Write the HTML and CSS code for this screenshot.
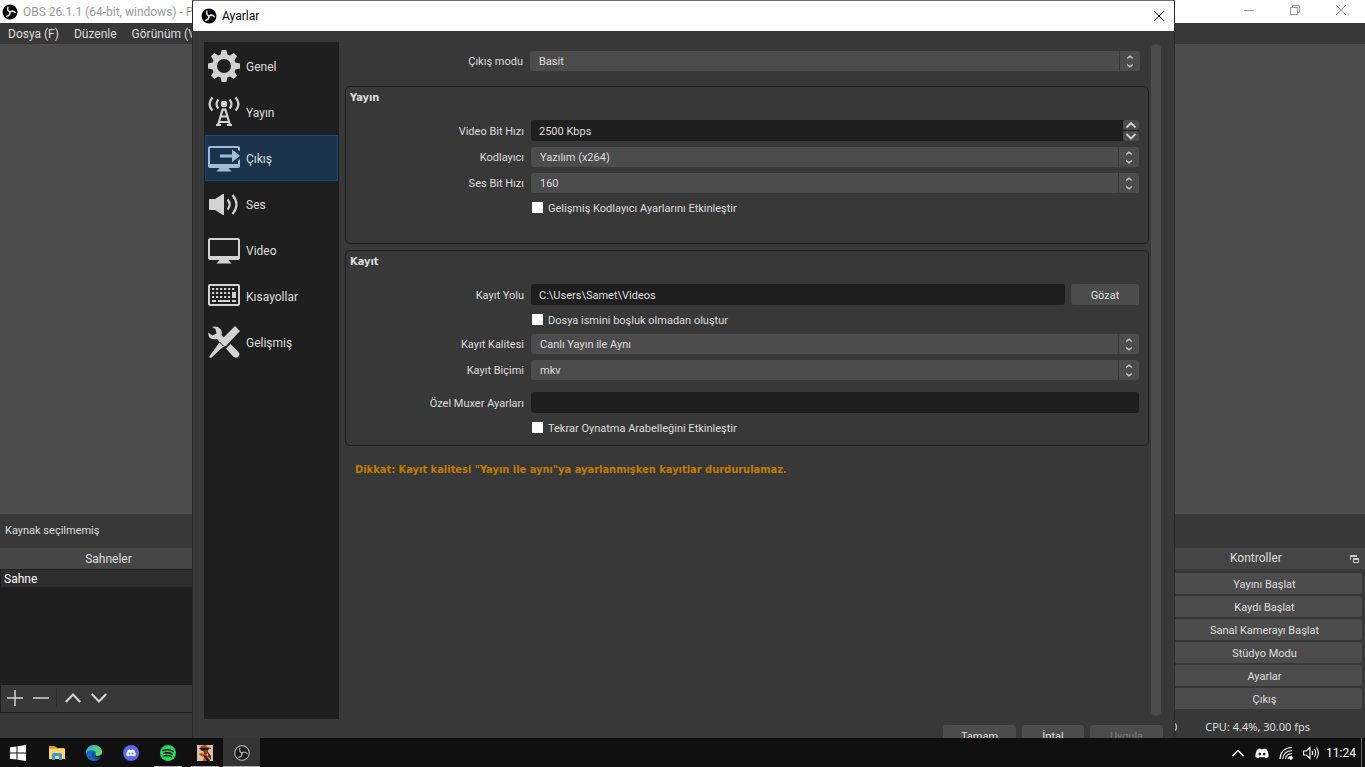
FILE: index.html
```html
<!DOCTYPE html>
<html lang="tr">
<head>
  <meta charset="UTF-8">
  <title>OBS - Ayarlar</title>
  <link rel="stylesheet" href="styles.css">
</head>
<body>

  <!-- shared icons -->
  <svg class="defs" width="0" height="0" aria-hidden="true">
    <symbol id="obs" viewBox="0 0 16 16">
      <circle cx="8" cy="8" r="7.5" fill="#050505"/>
      <g fill="none" stroke="#e6e6e6" stroke-width="1.5" stroke-linecap="round">
        <path d="M8 8C6.2 7.2 5.2 5.6 5.9 3.2"/>
        <path d="M8 8C6.2 7.2 5.2 5.6 5.9 3.2" transform="rotate(120 8 8)"/>
        <path d="M8 8C6.2 7.2 5.2 5.6 5.9 3.2" transform="rotate(240 8 8)"/>
      </g>
    </symbol>
    <symbol id="updown" viewBox="0 0 8 13">
      <path d="M1.2 3.6L4 1.2l2.8 2.4M1.2 9.4L4 11.8l2.8-2.4" fill="none" stroke="#c8c8c8" stroke-width="1.3"/>
    </symbol>
    <symbol id="discord" viewBox="0 0 16 12">
      <path fill-rule="evenodd" d="M4.2.6 6 .2l.6 1h2.8l.6-1 1.8.4 1.8 1.2C15 4.4 15.7 7 15.5 10l-3.3 1.7-1-1.5H4.8l-1 1.5L.5 10C.3 7 1 4.4 2.4 1.8zM5.5 5a1.5 1.6 0 1 0 0 3.2 1.5 1.6 0 0 0 0-3.2zm5 0a1.5 1.6 0 1 0 0 3.2 1.5 1.6 0 0 0 0-3.2z"/>
    </symbol>
  </svg>

  <div class="desktop">

    <!-- main window -->
    <div class="window">
      <header class="titlebar">
        <svg class="logo" width="16" height="16"><use href="#obs"/></svg>
        <span>OBS 26.1.1 (64-bit, windows) - P</span>
        <div class="window-buttons">
          <button aria-label="Simge durumuna küçült"><svg width="10" height="10"><path d="M0 5.5h10"/></svg></button>
          <button aria-label="Önceki boyut"><svg width="10" height="10"><path d="M.5 2.5h7v7h-7zM2.5 2.5v-2h7v7h-2"/></svg></button>
          <button aria-label="Kapat"><svg width="10" height="10"><path d="M0 0l10 10M10 0L0 10"/></svg></button>
        </div>
      </header>
      <nav class="menubar">
        <a href="#">Dosya (F)</a>
        <a href="#">Düzenle</a>
        <a href="#">Görünüm (V)</a>
      </nav>
      <div class="preview"></div>
      <div class="context-bar">Kaynak seçilmemiş</div>

      <div class="docks">
        <section class="dock scenes">
          <h2>Sahneler</h2>
          <ul class="scene-list">
            <li>Sahne</li>
          </ul>
          <div class="dock-toolbar">
            <button aria-label="Ekle"><svg width="16" height="16"><path d="M8 0v16M0 8h16"/></svg></button>
            <button aria-label="Kaldır"><svg width="16" height="16"><path d="M0 8h16"/></svg></button>
            <i></i>
            <button aria-label="Yukarı"><svg class="thick" width="16" height="16"><path d="M.8 12L8 4.5l7.2 7.5"/></svg></button>
            <button aria-label="Aşağı"><svg class="thick" width="16" height="16"><path d="M.8 4L8 11.5 15.2 4"/></svg></button>
          </div>
        </section>
        <section class="dock controls">
          <h2>Kontroller
            <svg width="9" height="8"><path d="M.5 5V.5h6V2" fill="none" stroke="#c8c8c8"/><path d="M0 0h7v2H0zM3 3h6v2H3z" fill="#c8c8c8"/><path d="M3.5 3.5h5v4h-5z" fill="none" stroke="#c8c8c8"/></svg>
          </h2>
          <div class="control-buttons">
            <button>Yayını Başlat</button>
            <button>Kaydı Başlat</button>
            <button>Sanal Kamerayı Başlat</button>
            <button>Stüdyo Modu</button>
            <button>Ayarlar</button>
            <button>Çıkış</button>
          </div>
        </section>
      </div>
      <footer class="statusbar">
        <span>0</span>
        <span class="cpu">CPU: 4.4%, 30.00 fps</span>
      </footer>
    </div>

    <!-- settings dialog -->
    <div class="dialog" role="dialog" aria-label="Ayarlar">
      <header class="dialog-title">
        <svg class="logo" width="16" height="16"><use href="#obs"/></svg>
        <span>Ayarlar</span>
        <button aria-label="Kapat"><svg width="10" height="10"><path d="M0 0l10 10M10 0L0 10"/></svg></button>
      </header>

      <div class="dialog-body">
        <div class="panes">
          <nav class="tabs">
            <a href="#">
              <svg width="32" height="32" viewBox="0 0 32 32"><path fill-rule="evenodd" d="M13.6 0h4.8l1 4.600 2.500 1L25.800 3l3.300 3.300-2.600 3.900 1 2.400 4.500 1v4.800l-4.500 1-1 2.500 2.600 3.900-3.300 3.300-3.900-2.600-2.500 1-1 4.500h-4.800l-1-4.500-2.400-1-3.900 2.600L3 25.800l2.500-3.900-1-2.500L0 18.400v-4.800l4.500-1 1-2.400L3 6.300 6.300 3l3.900 2.600 2.400-1zM16 9a7 7 0 1 0 0 14 7 7 0 0 0 0-14z"/></svg>
              <span>Genel</span>
            </a>
            <a href="#">
              <svg width="32" height="32" viewBox="0 0 32 32"><circle cx="16" cy="8" r="3.2"/><g fill="none" stroke="#d2d2d2" stroke-width="2.2"><path d="M14.800 13L10 29M17.200 13L22 29M14 13.600h4M13 20.500h6M11 26h10M8 29h5M19 29h5"/><path d="M10.500 3.500q-4 4.500 0 9M21.500 3.500q4 4.500 0 9M4.500 1.500q-6 6.500 0 13M27.500 1.500q6 6.500 0 13"/></g></svg>
              <span>Yayın</span>
            </a>
            <a href="#" class="selected">
              <svg width="32" height="32" viewBox="0 0 32 32"><path d="M2 4h28q2 0 2 2v3l-2-1V6H2v16h28v-3l2-2v7q0 2-2 2H20.500l3 3.500h-15l3-3.500H2q-2 0-2-2V6q0-2 2-2z"/><path d="M12 12.500h12v-5l8 6.300-8 6.400v-4.700H12z"/></svg>
              <span>Çıkış</span>
            </a>
            <a href="#">
              <svg width="32" height="32" viewBox="0 0 32 32"><path d="M1 12q0-1 1-1h5l8-5h1v21h-1l-8-5H2q-1 0-1-1z"/><path d="M19.500 11.500q4.500 5 0 10M24.500 7q8 9.500 0 19" fill="none" stroke="#d2d2d2" stroke-width="2.2"/></svg>
              <span>Ses</span>
            </a>
            <a href="#">
              <svg width="32" height="32" viewBox="0 0 32 32"><path fill-rule="evenodd" d="M2 4h28q2 0 2 2v18q0 2-2 2H20.500l3 3.500h-15l3-3.500H2q-2 0-2-2V6q0-2 2-2zm0 2v16h28V6z"/></svg>
              <span>Video</span>
            </a>
            <a href="#">
              <svg width="32" height="32" viewBox="0 0 32 32"><path fill-rule="evenodd" d="M2 4h28q2 0 2 2v18q0 2-2 2H2q-2 0-2-2V6q0-2 2-2zm0 2v18h28V6z"/><path d="M4 9h24M4 13h18M4 17h18" stroke="#d2d2d2" stroke-width="2" stroke-dasharray="2.2 1.8"/><path d="M4 20h4v2H4zm6 0h12v2H10zm14 0h4v2h-4zM24 12h4v6h-4z"/></svg>
              <span>Kısayollar</span>
            </a>
            <a href="#">
              <svg width="32" height="32" viewBox="0 0 32 32"><path d="M27 0l5 5-14 15-3 1L3 32l-2-1 10-14 1-2z"/><path d="M4 1q5-1.500 8.500 2 2 2.500 1 6l2.500 2.500-4.500 4.500L9 13Q3 14 1 11L0 6.500 4.500 9.500 8.500 7.500 7.500 3z"/><path d="M22.500 18l8 8q2 3-.5 5-2.500 1.500-5-.5l-7-8z"/><path d="M11.500 16l4.500 4.500" stroke="#1f1f1f"/></svg>
              <span>Gelişmiş</span>
            </a>
          </nav>

          <form class="content">
            <div class="row mode-row">
              <label for="mode">Çıkış modu</label>
              <div class="combo"><select id="mode"><option>Basit</option></select><svg width="20" height="20"><use href="#updown" x="6" y="4" width="8" height="13"/></svg></div>
            </div>

            <fieldset class="stream">
              <h3>Yayın</h3>
              <div class="row">
                <label for="vbitrate">Video Bit Hızı</label>
                <div class="spin">
                  <input type="text" id="vbitrate" value="2500 Kbps">
                  <div class="spin-buttons">
                    <button type="button" aria-label="Artır"><svg width="12" height="8"><path d="M1.500 6.500L6 2l4.500 4.500"/></svg></button>
                    <button type="button" aria-label="Azalt"><svg width="12" height="8"><path d="M1.500 2L6 6.500 10.500 2"/></svg></button>
                  </div>
                </div>
              </div>
              <div class="row">
                <label for="encoder">Kodlayıcı</label>
                <div class="combo"><select id="encoder"><option>Yazılım (x264)</option></select><svg width="20" height="20"><use href="#updown" x="6" y="4" width="8" height="13"/></svg></div>
              </div>
              <div class="row">
                <label for="abitrate">Ses Bit Hızı</label>
                <div class="combo"><select id="abitrate"><option>160</option></select><svg width="20" height="20"><use href="#updown" x="6" y="4" width="8" height="13"/></svg></div>
              </div>
              <label class="check"><input type="checkbox"><span>Gelişmiş Kodlayıcı Ayarlarını Etkinleştir</span></label>
            </fieldset>

            <fieldset class="record">
              <h3>Kayıt</h3>
              <div class="row">
                <label for="path">Kayıt Yolu</label>
                <div class="path">
                  <input type="text" id="path" value="C:\Users\Samet\Videos">
                  <button type="button">Gözat</button>
                </div>
              </div>
              <label class="check"><input type="checkbox"><span>Dosya ismini boşluk olmadan oluştur</span></label>
              <div class="row">
                <label for="quality">Kayıt Kalitesi</label>
                <div class="combo"><select id="quality"><option>Canlı Yayın ile Aynı</option></select><svg width="20" height="20"><use href="#updown" x="6" y="4" width="8" height="13"/></svg></div>
              </div>
              <div class="row">
                <label for="format">Kayıt Biçimi</label>
                <div class="combo"><select id="format"><option>mkv</option></select><svg width="20" height="20"><use href="#updown" x="6" y="4" width="8" height="13"/></svg></div>
              </div>
              <div class="row muxer-row">
                <label for="muxer">Özel Muxer Ayarları</label>
                <input type="text" id="muxer">
              </div>
              <label class="check"><input type="checkbox"><span>Tekrar Oynatma Arabelleğini Etkinleştir</span></label>
            </fieldset>

            <p class="warning">Dikkat: Kayıt kalitesi "Yayın ile aynı"ya ayarlanmışken kayıtlar durdurulamaz.</p>
          </form>

          <div class="scrollbar"></div>
        </div>

        <footer class="dialog-buttons">
          <button class="wide">Tamam</button>
          <button>İptal</button>
          <button class="wide" disabled>Uygula</button>
        </footer>
      </div>
    </div>
  </div>

  <!-- taskbar -->
  <div class="taskbar">
    <button class="start" aria-label="Başlat"><svg width="16" height="16" fill="#fff"><path d="M0 2.300L6.500 1.400v6.100H0zM7.500 1.200L16 0v7.500H7.500zM0 8.500h6.500v6.100L0 13.700zM7.500 8.500H16V16l-8.500-1.200z"/></svg></button>
    <button aria-label="Dosya Gezgini"><svg width="16" height="16"><path d="M0 1h6l2 2h7v4H0z" fill="#e09c10"/><path d="M0 3.500h16V14H0z" fill="#ffd667"/><path d="M3 15V9.500Q3 8 4.500 8h7Q13 8 13 9.500V15h-3v-4H6v4z" fill="#3b97dd"/></svg></button>
    <button aria-label="Edge"><svg width="16" height="16">
      <defs><linearGradient id="edge" x2="1" y2=".5"><stop offset="0" stop-color="#2aa8e0"/><stop offset="1" stop-color="#64db62"/></linearGradient></defs>
      <circle cx="8" cy="8" r="8" fill="#1668c0"/>
      <path d="M0 8C0 3.500 3.500 0 8 0s8 3.200 8 6.800C16 9.500 14 11 11.600 11 9.500 11 9 10 9.600 9.200 10.500 8 9.500 5.500 6.500 5.300 3.500 5.200 1 6.300 0 8z" fill="url(#edge)"/>
      <path d="M6 8c-1 3 1 6.500 5 6.500 1.500 0 3-.7 4-2-1 .8-5 1-6.500-1C7.600 10.500 8 9 8.500 8.500 8.300 7 6.500 6.800 6 8z" fill="#0c4a92"/>
      <path d="M9.600 9.200q-.6 1.800 2 1.800 2.500 0 3.800-1.600l.6 1.800-2 1.300q-4 .6-5-1.500z" fill="#101010"/></svg></button>
    <button aria-label="Discord"><svg width="16" height="16"><circle cx="8" cy="8" r="8" fill="#5865f2"/><use href="#discord" x="3" y="4" width="10" height="8" fill="#fff"/></svg></button>
    <button class="open" aria-label="Spotify"><svg width="16" height="16"><circle cx="8" cy="8" r="8" fill="#1ed760"/><path d="M3 5.500q5.500-1.700 10.200.8M3.500 8.300q4.800-1.400 8.800.8M4 11q4-1.200 7.300.7" fill="none" stroke="#101010" stroke-width="1.4" stroke-linecap="round"/></svg></button>
    <button class="open" aria-label="Oyun"><svg width="16" height="16"><path d="M0 0h16v16H0z" fill="#d8bfa8"/><path d="M4 1l5-1 1 2 4 1v1H3V3z" fill="#a3431a"/><path d="M2 3h10v1l-2 2H5z" fill="#241210"/><path d="M6 5h5v3l-2 2-2-1z" fill="#7e3a1c"/><path d="M4 8l3 1 3 1 2 3 1 3H6l1-4-3-1-2-2z" fill="#b5521c"/><path d="M6 10l3 1 4 5h-3z" fill="#32150f"/><path d="M11 7l3 4v4l-3-4z" fill="#5a2413"/></svg></button>
    <button class="open active" aria-label="OBS"><svg width="16" height="16"><circle cx="8" cy="8" r="7.3" fill="#1e1b1e" stroke="#a8a8a8" stroke-width="1.2"/><g fill="none" stroke="#a8a8a8" stroke-width="1.3" stroke-linecap="round"><path d="M8 8C6.200 7.200 5.200 5.600 5.900 3.200"/><path d="M8 8C6.200 7.200 5.200 5.600 5.900 3.200" transform="rotate(120 8 8)"/><path d="M8 8C6.200 7.200 5.200 5.600 5.900 3.200" transform="rotate(240 8 8)"/></g></svg></button>

    <div class="tray">
      <svg width="14" height="14"><path d="M1.500 10L7 4.500l5.500 5.500" fill="none" stroke="#fff" stroke-width="1.3"/></svg>
      <svg width="14" height="14" fill="#fff"><use href="#discord" x="0" y="2" width="14" height="11"/></svg>
      <svg width="14" height="14" fill="none" stroke="#fff" stroke-width="1.1"><path d="M1 13Q1.500 2 13 1.500M3.700 13Q4.500 5 13 4.500M6.500 13Q7 8 13 7.500M9 13q.5-2.500 4-2.700"/><circle cx="12" cy="12" r="1.2" fill="#fff"/></svg>
      <svg width="17" height="14" fill="none" stroke="#fff" stroke-width="1.1"><path d="M.6 5h2.600L7 1.500v11L3.200 9H.6zM9 5q1.500 2 0 4M11.200 3q3 4 0 8M13.400 1.500q4 5.500 0 11"/></svg>
      <time>11:24</time>
      <i></i>
    </div>
  </div>

</body>
</html>
```

FILE: styles.css
```css
* {
  box-sizing: border-box;
}

body {
  margin: 0;
  height: 100vh;
  display: flex;
  flex-direction: column;
  overflow: hidden;
  background: #101010;
  color: #dedede;
  font: 11px/16px Roboto, sans-serif;
}

button, input, select {
  margin: 0;
  padding: 0;
  border: none;
  color: inherit;
  font: inherit;
}

button {
  background: none;
}

a {
  color: inherit;
  text-decoration: none;
}

h2, h3, p, ul {
  margin: 0;
  padding: 0;
}

svg {
  display: block;
  flex: none;
}

.defs {
  position: absolute;
}

.desktop {
  position: relative;
  flex: 1;
  min-height: 0;
  overflow: hidden;
}

/* main window */
.window {
  height: 100%;
  display: flex;
  flex-direction: column;
  background: #383838;
}

.titlebar {
  display: flex;
  align-items: center;
  height: 23px;
  padding: 0 1px 0 2px;
  gap: 5px;
  background: #fff;
  color: #999;
  font-size: 12px;
}

.window-buttons {
  display: flex;
  margin-left: auto;
}

.window-buttons button {
  display: flex;
  justify-content: center;
  width: 46px;
  padding-bottom: 3px;
}

.window-buttons path {
  fill: none;
  stroke: #999;
}

.menubar {
  display: flex;
  align-items: center;
  gap: 15px;
  height: 21px;
  padding-left: 8px;
  font-size: 12px;
}

.preview {
  flex: 1;
  background: #4c4c4c;
}

.context-bar {
  height: 34px;
  padding: 9px 5px;
}

.docks {
  display: flex;
  justify-content: space-between;
  height: 165px;
}

.dock {
  display: flex;
  flex-direction: column;
}

.dock h2 {
  height: 21px;
  background: #454545;
  text-align: center;
  font-size: 12px;
  font-weight: normal;
  line-height: 23px;
}

.scenes {
  width: 217px;
}

.scene-list {
  flex: 1;
  padding: 1px;
  background: #1f1f1f;
  list-style: none;
}

.scene-list li {
  height: 17px;
  padding-left: 3px;
  background: #2d2d2d;
  color: #fff;
  font-size: 12px;
  line-height: 18px;
}

.dock-toolbar {
  display: flex;
  align-items: center;
  gap: 10px;
  height: 28px;
  padding: 0 0 2px 6px;
  border: 1px solid #1f1f1f;
  border-top: none;
}

.dock-toolbar path {
  fill: none;
  stroke: #d2d2d2;
  stroke-width: 1.5;
}

.dock-toolbar .thick path {
  stroke-width: 2.2;
}

.dock-toolbar i {
  width: 1px;
  height: 19px;
  margin: 0 -3px;
  background: #2d2d2d;
}

.dock-toolbar i + button {
  margin-left: 1px;
}

.controls {
  width: 201px;
}

.controls h2 {
  display: flex;
  align-items: center;
  justify-content: space-between;
  padding: 0 6px 0 66px;
}

.control-buttons {
  display: flex;
  flex-direction: column;
  gap: 2px;
  padding: 4px 3px;
}

.control-buttons button,
.dialog-buttons button,
.path button {
  height: 21px;
  padding-top: 2px;
  border-radius: 3px;
  background: #4c4c4c;
}

.statusbar {
  display: flex;
  justify-content: flex-end;
  align-items: center;
  gap: 28px;
  height: 25px;
  padding: 3px 55px 0 0;
  font-family: "Noto Sans", sans-serif;
}

/* settings dialog, lies over the main window */
.dialog {
  position: absolute;
  top: 0;
  bottom: -20px;
  left: 192px;
  right: 190px;
  display: flex;
  flex-direction: column;
  border: 1px solid #2b2b2b;
  border-top-color: #6b6b6b;
  background: #383838;
}

.dialog-title {
  display: flex;
  align-items: center;
  gap: 5px;
  height: 30px;
  padding: 0 10px 0 8px;
  background: #fff;
  color: #000;
  font-size: 12px;
}

.dialog-title button {
  margin-left: auto;
}

.dialog-title button path {
  fill: none;
  stroke: #000;
}

.dialog-body {
  flex: 1;
  min-height: 0;
  display: flex;
  flex-direction: column;
  padding: 11px;
}

.panes {
  flex: 1;
  min-height: 0;
  display: flex;
}

.tabs {
  width: 135px;
  padding: 1px;
  background: #1f1f1f;
  font-size: 12px;
}

.tabs a {
  display: flex;
  align-items: center;
  gap: 6px;
  height: 46px;
  padding-left: 2px;
  border: 1px solid transparent;
}

.tabs span {
  padding-top: 2px;
}

.tabs svg {
  fill: #d2d2d2;
}

.tabs .selected {
  border-color: #12497c;
  background: #1b334b;
}

.tabs .selected svg {
  fill: #a0bcd8;
}

.content {
  flex: 1;
  padding: 9px 2px 0 6px;
}

.row {
  display: grid;
  grid-template-columns: 178px 1fr;
  gap: 7px;
  align-items: center;
  margin-bottom: 6px;
}

.row > label {
  padding-top: 2px;
  text-align: right;
}

.mode-row {
  padding-right: 9px;
  margin-bottom: 15px;
}

.combo {
  display: flex;
  height: 20px;
}

.combo select {
  flex: 1;
  padding: 2px 0 0 9px;
  appearance: none;
  border-radius: 3px 0 0 3px;
  background: #4c4c4c;
}

.combo svg {
  margin-left: 1px;
  border-radius: 0 3px 3px 0;
  background: #4c4c4c;
}

fieldset {
  margin: 0 0 6px;
  padding: 3px 9px 0 0;
  border: 1px solid #1f1f1f;
  border-radius: 5px;
}

.stream {
  height: 158px;
}

.record {
  height: 196px;
}

h3 {
  margin-bottom: 14px;
  padding-left: 4px;
  font: bold 11px/16px "DejaVu Sans Condensed", "DejaVu Sans", sans-serif;
}

input[type="text"] {
  flex: 1;
  min-width: 0;
  height: 21px;
  padding: 2px 0 0 8px;
  border-radius: 3px;
  background: #1f1f1f;
}

.spin {
  display: flex;
  height: 21px;
  border-radius: 3px;
  background: #1f1f1f;
}

.spin-buttons {
  display: flex;
  flex-direction: column;
  gap: 1px;
  width: 16px;
}

.spin-buttons button {
  display: flex;
  align-items: center;
  justify-content: center;
  height: 10px;
  border-radius: 2px;
  background: #4c4c4c;
}

.spin-buttons path {
  fill: none;
  stroke: #d2d2d2;
  stroke-width: 1.8;
}

.path {
  display: flex;
  gap: 6px;
}

.path button {
  width: 68px;
}

.muxer-row {
  padding-top: 6px;
}

.check {
  display: flex;
  align-items: center;
  gap: 5px;
  height: 17px;
  margin: 0 0 6px 186px;
}

.check span {
  padding-top: 2px;
}

.check input {
  width: 11px;
  height: 11px;
  appearance: none;
  background: #fff;
}

.warning {
  padding: 10px 0 0 10px;
  color: #c07c00;
  font: bold 11px/16px "DejaVu Sans Condensed", "DejaVu Sans", sans-serif;
}

.scrollbar {
  width: 10px;
  margin: 2px 2px 3px 0;
  border-radius: 5px;
  background: #4c4c4c;
}

.dialog-buttons {
  display: flex;
  justify-content: flex-end;
  gap: 6px;
  padding-top: 6px;
}

.dialog-buttons button {
  width: 62px;
}

.dialog-buttons .wide {
  width: 73px;
}

.dialog-buttons button:disabled {
  color: #777;
}

/* taskbar */
.taskbar {
  display: flex;
  height: 29px;
  background: #101010;
}

.taskbar button {
  display: flex;
  flex-direction: column;
  align-items: center;
  justify-content: center;
  width: 37px;
}

.taskbar .start {
  width: 38px;
  padding-right: 2px;
}

.taskbar .open {
  justify-content: flex-end;
}

.taskbar .open::after {
  content: "";
  width: 28px;
  height: 1px;
  margin-top: 5px;
  background: #b0b0b0;
}

.taskbar .active {
  background: #333;
}

.taskbar .active::after {
  width: 100%;
}

.tray {
  display: flex;
  align-items: center;
  gap: 10px;
  margin-left: auto;
  padding-right: 3px;
  color: #fff;
  font-size: 12px;
}

.tray time {
  margin-left: -4px;
}

.tray i {
  width: 1px;
  height: 29px;
  margin-left: -5px;
  background: #666;
}
```
